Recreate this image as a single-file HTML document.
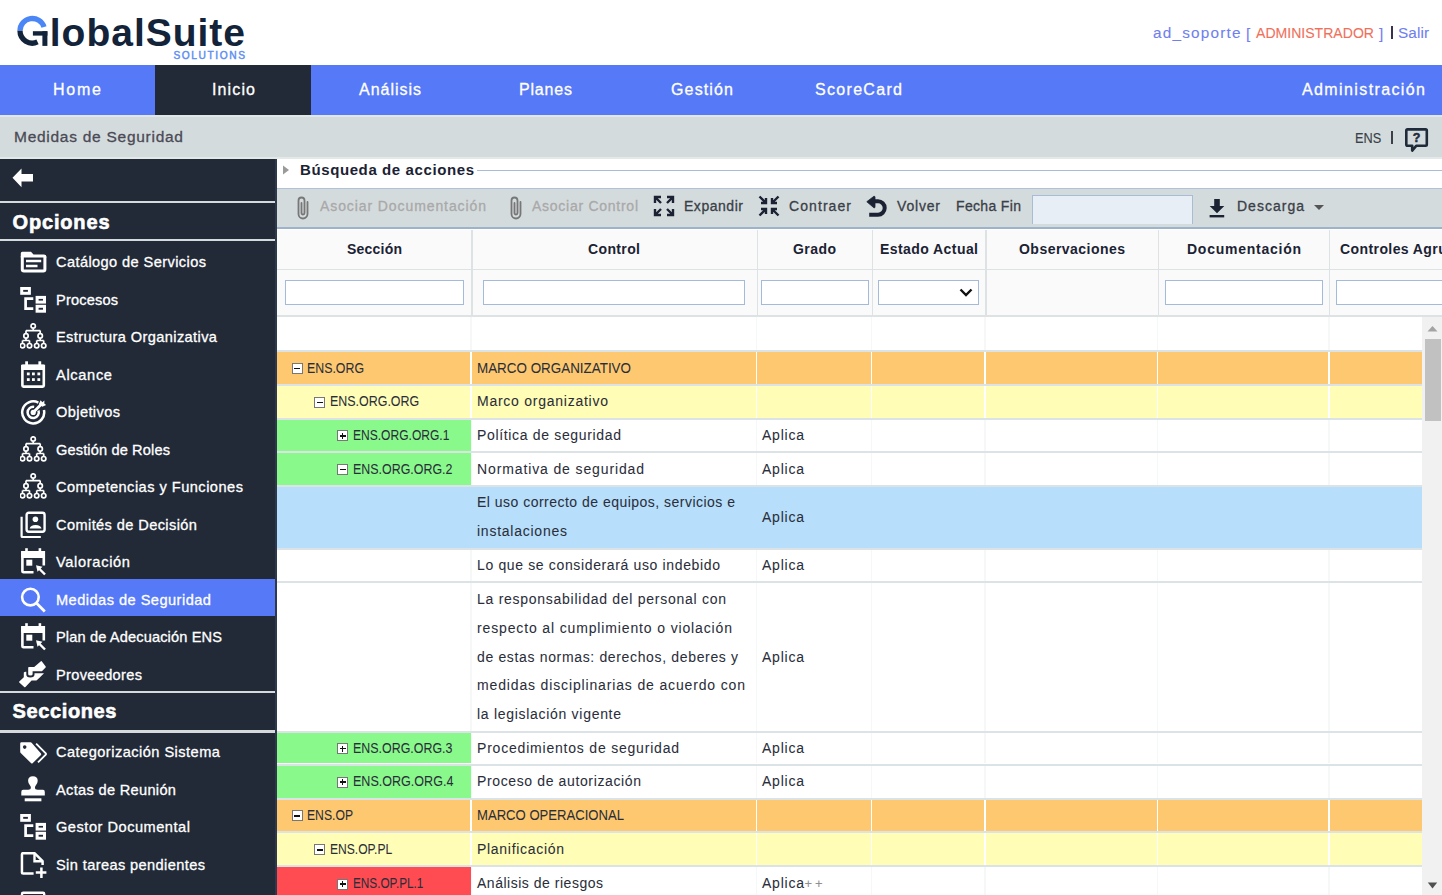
<!DOCTYPE html><html><head><meta charset="utf-8"><title>GlobalSuite</title><style>
*{margin:0;padding:0;box-sizing:border-box}
html,body{width:1442px;height:895px;overflow:hidden;background:#fff;font-family:"Liberation Sans",sans-serif}
.t{position:absolute;white-space:nowrap;line-height:1.117}
.a{position:absolute}
</style></head><body>
<svg class="a" style="left:15px;top:13px" width="36" height="36" viewBox="0 0 36 36">
<path d="M5 17.8 A12.3 12.3 0 0 1 29.0 14.04" fill="none" stroke="#4B86F7" stroke-width="5.3"/>
<path d="M5 17.8 A12.3 12.3 0 0 0 22.5 28.95" fill="none" stroke="#12233A" stroke-width="5.3"/>
<rect x="17.9" y="18.2" width="14.5" height="4.4" fill="#12233A"/><rect x="27.4" y="18.2" width="5" height="14.7" fill="#12233A"/>
</svg>
<div class="t" style="left:49.8px;top:10.7px;font-size:39px;letter-spacing:0.982px;color:#12233A;font-weight:bold;">lobalSuite</div>
<div class="t" style="left:173.5px;top:49.6px;font-size:10.2px;letter-spacing:1.569px;color:#5E8FF2;-webkit-text-stroke:0.45px #5E8FF2;">SOLUTIONS</div>
<div class="t" style="left:1153.0px;top:24.0px;font-size:15.3px;letter-spacing:1.215px;color:#6F7FF0;-webkit-text-stroke:0.10px #6F7FF0;">ad_soporte</div>
<div class="t" style="left:1246.0px;top:24.7px;font-size:15.3px;letter-spacing:0.000px;color:#6F7FF0;-webkit-text-stroke:0.10px #6F7FF0;">[</div>
<div class="t" style="left:1256.0px;top:24.0px;font-size:15.3px;letter-spacing:0.000px;color:#F0705A;-webkit-text-stroke:0.10px #F0705A;transform:scaleX(0.9193);transform-origin:0 0;">ADMINISTRADOR</div>
<div class="t" style="left:1379.0px;top:24.7px;font-size:15.3px;letter-spacing:0.000px;color:#6F7FF0;-webkit-text-stroke:0.10px #6F7FF0;">]</div>
<div class="a" style="left:1390.5px;top:26px;width:2px;height:13px;background:#3a3350"></div>
<div class="t" style="left:1398.0px;top:24.0px;font-size:15.3px;letter-spacing:0.098px;color:#6F7FF0;-webkit-text-stroke:0.10px #6F7FF0;">Salir</div>
<div class="a" style="left:0;top:65px;width:1442px;height:50px;background:#5679F7"></div>
<div class="a" style="left:155px;top:65px;width:156px;height:50px;background:#222A38"></div>
<div class="t" style="left:53.0px;top:80.5px;font-size:16px;letter-spacing:1.773px;color:#fff;-webkit-text-stroke:0.30px #fff;">Home</div>
<div class="t" style="left:212.0px;top:80.5px;font-size:16px;letter-spacing:1.130px;color:#fff;-webkit-text-stroke:0.30px #fff;">Inicio</div>
<div class="t" style="left:359.0px;top:80.5px;font-size:16px;letter-spacing:0.981px;color:#fff;-webkit-text-stroke:0.30px #fff;">Análisis</div>
<div class="t" style="left:519.0px;top:80.5px;font-size:16px;letter-spacing:0.816px;color:#fff;-webkit-text-stroke:0.30px #fff;">Planes</div>
<div class="t" style="left:671.0px;top:80.5px;font-size:16px;letter-spacing:1.143px;color:#fff;-webkit-text-stroke:0.30px #fff;">Gestión</div>
<div class="t" style="left:815.0px;top:80.5px;font-size:16px;letter-spacing:1.315px;color:#fff;-webkit-text-stroke:0.30px #fff;">ScoreCard</div>
<div class="t" style="left:1302.0px;top:80.5px;font-size:16px;letter-spacing:1.390px;color:#fff;-webkit-text-stroke:0.30px #fff;">Administración</div>
<div class="a" style="left:0;top:115px;width:1442px;height:44px;background:#D4DBDD"></div>
<div class="a" style="left:0;top:114.8px;width:1442px;height:2px;background:#E1E6E7"></div>
<div class="a" style="left:0;top:156.6px;width:1442px;height:2px;background:#E3E8E8"></div>
<div class="t" style="left:14.0px;top:128.3px;font-size:15.5px;letter-spacing:0.731px;color:#4a4a55;-webkit-text-stroke:0.30px #4a4a55;">Medidas de Seguridad</div>
<div class="t" style="left:1355.0px;top:129.5px;font-size:14.5px;letter-spacing:0.000px;color:#3a3f48;-webkit-text-stroke:0.15px #3a3f48;transform:scaleX(0.8787);transform-origin:0 0;">ENS</div>
<div class="a" style="left:1391px;top:131px;width:1.5px;height:13px;background:#3a3f48"></div>
<svg class="a" style="left:1403px;top:127px" width="26" height="26" viewBox="0 0 26 26">
<path d="M3.3 3.6 Q3.3 2.4 4.5 2.4 H22.6 Q23.8 2.4 23.8 3.6 V17.6 Q23.8 18.8 22.6 18.8 H13.2 L9.2 23.6 V18.8 H4.5 Q3.3 18.8 3.3 17.6 Z" fill="none" stroke="#1F2B3A" stroke-width="2.6" stroke-linejoin="round"/>
<text x="13.6" y="15.3" font-family="Liberation Sans" font-weight="bold" font-size="12.5" text-anchor="middle" fill="#1F2B3A" stroke="#1F2B3A" stroke-width="0.5">?</text>
</svg>
<div class="a" style="left:0;top:159px;width:276px;height:736px;background:#222A38"></div>
<svg class="a" style="left:12px;top:168px" width="22" height="20" viewBox="0 0 22 20"><path d="M0.5 9.7 L9.5 0.5 V6 H21 V13.5 H9.5 V19.3 Z" fill="#fff"/></svg>
<div class="a" style="left:0;top:200.5px;width:276px;height:2.6px;background:#D5DADD"></div>
<div class="t" style="left:12.5px;top:210.6px;font-size:20px;letter-spacing:0.838px;color:#fff;font-weight:bold;-webkit-text-stroke:0.60px #fff;">Opciones</div>
<div class="a" style="left:0;top:238.7px;width:276px;height:2.6px;background:#D5DADD"></div>
<div class="a" style="left:0;top:578.6px;width:275.2px;height:37.5px;background:#5679F7"></div>
<div class="a" style="left:0;top:690.7px;width:276px;height:2.6px;background:#D5DADD"></div>
<div class="t" style="left:12.5px;top:700.2px;font-size:20px;letter-spacing:0.631px;color:#fff;font-weight:bold;-webkit-text-stroke:0.60px #fff;">Secciones</div>
<div class="a" style="left:0;top:730px;width:276px;height:2.6px;background:#D5DADD"></div>
<div class="t" style="left:56.0px;top:254.0px;font-size:14.6px;letter-spacing:0.399px;color:#fff;-webkit-text-stroke:0.30px #fff;">Catálogo de Servicios</div>
<div class="t" style="left:56.0px;top:291.5px;font-size:14.6px;letter-spacing:0.163px;color:#fff;-webkit-text-stroke:0.30px #fff;">Procesos</div>
<div class="t" style="left:56.0px;top:329.0px;font-size:14.6px;letter-spacing:0.384px;color:#fff;-webkit-text-stroke:0.30px #fff;">Estructura Organizativa</div>
<div class="t" style="left:56.0px;top:366.5px;font-size:14.6px;letter-spacing:0.676px;color:#fff;-webkit-text-stroke:0.30px #fff;">Alcance</div>
<div class="t" style="left:56.0px;top:404.0px;font-size:14.6px;letter-spacing:0.392px;color:#fff;-webkit-text-stroke:0.30px #fff;">Objetivos</div>
<div class="t" style="left:56.0px;top:441.5px;font-size:14.6px;letter-spacing:0.133px;color:#fff;-webkit-text-stroke:0.30px #fff;">Gestión de Roles</div>
<div class="t" style="left:56.0px;top:479.0px;font-size:14.6px;letter-spacing:0.474px;color:#fff;-webkit-text-stroke:0.30px #fff;">Competencias y Funciones</div>
<div class="t" style="left:56.0px;top:516.5px;font-size:14.6px;letter-spacing:0.395px;color:#fff;-webkit-text-stroke:0.30px #fff;">Comités de Decisión</div>
<div class="t" style="left:56.0px;top:554.0px;font-size:14.6px;letter-spacing:0.677px;color:#fff;-webkit-text-stroke:0.30px #fff;">Valoración</div>
<div class="t" style="left:56.0px;top:591.5px;font-size:14.6px;letter-spacing:0.468px;color:#fff;-webkit-text-stroke:0.30px #fff;">Medidas de Seguridad</div>
<div class="t" style="left:56.0px;top:629.0px;font-size:14.6px;letter-spacing:0.136px;color:#fff;-webkit-text-stroke:0.30px #fff;">Plan de Adecuación ENS</div>
<div class="t" style="left:56.0px;top:666.5px;font-size:14.6px;letter-spacing:0.322px;color:#fff;-webkit-text-stroke:0.30px #fff;">Proveedores</div>
<div class="t" style="left:56.0px;top:744.0px;font-size:14.6px;letter-spacing:0.467px;color:#fff;-webkit-text-stroke:0.30px #fff;">Categorización Sistema</div>
<div class="t" style="left:56.0px;top:781.5px;font-size:14.6px;letter-spacing:0.316px;color:#fff;-webkit-text-stroke:0.30px #fff;">Actas de Reunión</div>
<div class="t" style="left:56.0px;top:819.0px;font-size:14.6px;letter-spacing:0.514px;color:#fff;-webkit-text-stroke:0.30px #fff;">Gestor Documental</div>
<div class="t" style="left:56.0px;top:856.5px;font-size:14.6px;letter-spacing:0.388px;color:#fff;-webkit-text-stroke:0.30px #fff;">Sin tareas pendientes</div>
<div class="a" style="left:275.2px;top:159px;width:1.8px;height:736px;background:#2E3A4C"></div>
<svg class="a" style="left:282px;top:165px" width="8" height="10" viewBox="0 0 8 10"><path d="M1 0.5 L7 5 L1 9.5 Z" fill="#9a9a9a"/></svg>
<div class="t" style="left:300.0px;top:162.0px;font-size:15px;letter-spacing:0.603px;color:#1B2233;font-weight:bold;">Búsqueda de acciones</div>
<div class="a" style="left:477px;top:169.6px;width:965px;height:1.2px;background:#A9BCD6"></div>
<div class="a" style="left:277px;top:187.5px;width:1165px;height:41.3px;background:#D4DBDD;border-top:1.6px solid #AFC2D8;border-bottom:2px solid #9DB2CB"></div>
<svg class="a" style="left:295px;top:195px" width="16" height="26" viewBox="0 0 16 26"><path d="M12.5 7 V19 A4.5 4.5 0 0 1 3.5 19 V5.5 A3 3 0 0 1 9.5 5.5 V18 A1.5 1.5 0 0 1 6.5 18 V8" fill="none" stroke="#777" stroke-width="1.8" stroke-linecap="round"/></svg>
<div class="t" style="left:320.0px;top:198.5px;font-size:14px;letter-spacing:0.908px;color:#A9A9A9;-webkit-text-stroke:0.30px #A9A9A9;">Asociar Documentación</div>
<svg class="a" style="left:508px;top:195px" width="16" height="26" viewBox="0 0 16 26"><path d="M12.5 7 V19 A4.5 4.5 0 0 1 3.5 19 V5.5 A3 3 0 0 1 9.5 5.5 V18 A1.5 1.5 0 0 1 6.5 18 V8" fill="none" stroke="#777" stroke-width="1.8" stroke-linecap="round"/></svg>
<div class="t" style="left:532.0px;top:198.5px;font-size:14px;letter-spacing:0.735px;color:#A9A9A9;-webkit-text-stroke:0.30px #A9A9A9;">Asociar Control</div>
<svg class="a" style="left:653px;top:195px" width="22" height="22" viewBox="0 0 22 22"><g fill="none" stroke="#1B2233" stroke-width="2.4"><path d="M2 8 V2 H8 M2 2 L8 8"/><path d="M14 2 H20 V8 M20 2 L14 8"/><path d="M2 14 V20 H8 M2 20 L8 14"/><path d="M20 14 V20 H14 M20 20 L14 14"/></g></svg>
<div class="t" style="left:684.0px;top:198.5px;font-size:14px;letter-spacing:0.535px;color:#3a3f48;-webkit-text-stroke:0.30px #3a3f48;">Expandir</div>
<svg class="a" style="left:758px;top:195px" width="22" height="22" viewBox="0 0 22 22"><g fill="none" stroke="#1B2233" stroke-width="2.4"><path d="M3 8 H8 V3 M1.5 1.5 L8 8"/><path d="M14 3 V8 H19 M20.5 1.5 L14 8"/><path d="M3 14 H8 V19 M1.5 20.5 L8 14"/><path d="M19 14 H14 V19 M20.5 20.5 L14 14"/></g></svg>
<div class="t" style="left:789.0px;top:198.5px;font-size:14px;letter-spacing:1.076px;color:#3a3f48;-webkit-text-stroke:0.30px #3a3f48;">Contraer</div>
<svg class="a" style="left:865px;top:195px" width="24" height="24" viewBox="0 0 24 24"><path d="M8 6.3 H13 A6.7 6.7 0 0 1 13 19.7 H4.2" fill="none" stroke="#1B2233" stroke-width="4"/><path d="M1.8 6.7 L8.9 1.3 Q10 1 10 2.2 V11.8 Q10 13.2 8.9 12.8 Z" fill="#1B2233" stroke="#1B2233" stroke-width="0.8" stroke-linejoin="round"/></svg>
<div class="t" style="left:897.0px;top:198.5px;font-size:14px;letter-spacing:0.818px;color:#3a3f48;-webkit-text-stroke:0.30px #3a3f48;">Volver</div>
<div class="t" style="left:956.0px;top:198.5px;font-size:14px;letter-spacing:0.344px;color:#3a3f48;-webkit-text-stroke:0.30px #3a3f48;">Fecha Fin</div>
<div class="a" style="left:1032px;top:194.5px;width:161px;height:29px;background:#E8EEF5;border:1px solid #A9BCD6;border-bottom:none"></div>
<svg class="a" style="left:1206px;top:196px" width="22" height="22" viewBox="0 0 22 22"><path d="M8.2 3 H13.8 V10 H18.3 L11 17.3 L3.7 10 H8.2 Z" fill="#1B2233"/><rect x="3.6" y="19" width="14.6" height="2.4" fill="#1B2233"/></svg>
<div class="t" style="left:1237.0px;top:198.5px;font-size:14px;letter-spacing:1.012px;color:#3a3f48;-webkit-text-stroke:0.30px #3a3f48;">Descarga</div>
<svg class="a" style="left:1313px;top:204px" width="12" height="7" viewBox="0 0 12 7"><path d="M1 1 H11 L6 6 Z" fill="#555"/></svg>
<div class="a" style="left:277px;top:229.5px;width:1165px;height:87px;background:#FAFAFA"></div>
<div class="a" style="left:471.2px;top:229.5px;width:1.6px;height:86px;background:#DDE3E4"></div>
<div class="a" style="left:756.7px;top:229.5px;width:1.6px;height:86px;background:#DDE3E4"></div>
<div class="a" style="left:871.7px;top:229.5px;width:1.6px;height:86px;background:#DDE3E4"></div>
<div class="a" style="left:985.2px;top:229.5px;width:1.6px;height:86px;background:#DDE3E4"></div>
<div class="a" style="left:1157.6px;top:229.5px;width:1.6px;height:86px;background:#DDE3E4"></div>
<div class="a" style="left:1328.9px;top:229.5px;width:1.6px;height:86px;background:#DDE3E4"></div>
<div class="a" style="left:277px;top:268.5px;width:1165px;height:1.8px;background:#DDE3E4"></div>
<div class="a" style="left:277px;top:314.5px;width:1165px;height:2px;background:#DDE3E4"></div>
<div class="t" style="left:347.0px;top:241.5px;font-size:14px;letter-spacing:0.219px;color:#1B2233;font-weight:bold;">Sección</div>
<div class="t" style="left:588.0px;top:241.5px;font-size:14px;letter-spacing:0.372px;color:#1B2233;font-weight:bold;">Control</div>
<div class="t" style="left:793.0px;top:241.5px;font-size:14px;letter-spacing:0.443px;color:#1B2233;font-weight:bold;">Grado</div>
<div class="t" style="left:880.0px;top:241.5px;font-size:14px;letter-spacing:0.431px;color:#1B2233;font-weight:bold;">Estado Actual</div>
<div class="t" style="left:1019.0px;top:241.5px;font-size:14px;letter-spacing:0.468px;color:#1B2233;font-weight:bold;">Observaciones</div>
<div class="t" style="left:1187.0px;top:241.5px;font-size:14px;letter-spacing:0.749px;color:#1B2233;font-weight:bold;">Documentación</div>
<div class="t" style="left:1340.0px;top:241.5px;font-size:14px;letter-spacing:0.411px;color:#1B2233;font-weight:bold;">Controles Agrupados</div>
<div class="a" style="left:285px;top:279.8px;width:179px;height:25.5px;background:#fff;border:1.5px solid #A3BADA"></div>
<div class="a" style="left:483px;top:279.8px;width:262px;height:25.5px;background:#fff;border:1.5px solid #A3BADA"></div>
<div class="a" style="left:760.5px;top:279.8px;width:108.5px;height:25.5px;background:#fff;border:1.5px solid #A3BADA"></div>
<div class="a" style="left:1164.5px;top:279.8px;width:158.5px;height:25.5px;background:#fff;border:1.5px solid #A3BADA"></div>
<div class="a" style="left:1336px;top:279.8px;width:124px;height:25.5px;background:#fff;border:1.5px solid #A3BADA"></div>
<div class="a" style="left:878px;top:279.8px;width:101px;height:24.8px;background:#fff;border:1.5px solid #A3BADA"></div>
<svg class="a" style="left:959px;top:288px" width="14" height="9" viewBox="0 0 14 9"><path d="M1.5 1.5 L7 7 L12.5 1.5" fill="none" stroke="#111" stroke-width="2.4"/></svg>
<div class="a" style="left:277px;top:316.5px;width:1145px;height:579px;background:#fff"></div>
<div class="a" style="left:277px;top:350.0px;width:1145px;height:2px;background:#DCE3E6"></div>
<div class="a" style="left:470.35px;top:316.5px;width:1.5px;height:33.5px;background:#F6F7F7"></div>
<div class="a" style="left:755.85px;top:316.5px;width:1.5px;height:33.5px;background:#F6F7F7"></div>
<div class="a" style="left:870.85px;top:316.5px;width:1.5px;height:33.5px;background:#F6F7F7"></div>
<div class="a" style="left:984.35px;top:316.5px;width:1.5px;height:33.5px;background:#F6F7F7"></div>
<div class="a" style="left:1156.75px;top:316.5px;width:1.5px;height:33.5px;background:#F6F7F7"></div>
<div class="a" style="left:1328.05px;top:316.5px;width:1.5px;height:33.5px;background:#F6F7F7"></div>
<div class="a" style="left:277px;top:384.0px;width:1145px;height:2px;background:#DCE3E6"></div>
<div class="a" style="left:277px;top:352.0px;width:1145px;height:32.0px;background:#FDC86F"></div>
<div class="a" style="left:470.35px;top:352.0px;width:1.5px;height:32.0px;background:#fff"></div>
<div class="a" style="left:755.85px;top:352.0px;width:1.5px;height:32.0px;background:#fff"></div>
<div class="a" style="left:870.85px;top:352.0px;width:1.5px;height:32.0px;background:#fff"></div>
<div class="a" style="left:984.35px;top:352.0px;width:1.5px;height:32.0px;background:#fff"></div>
<div class="a" style="left:1156.75px;top:352.0px;width:1.5px;height:32.0px;background:#fff"></div>
<div class="a" style="left:1328.05px;top:352.0px;width:1.5px;height:32.0px;background:#fff"></div>
<div class="a" style="left:291.5px;top:363.0px;width:11px;height:11px;background:#fff;border:1.3px solid #777"></div>
<div class="a" style="left:294.0px;top:367.8px;width:6px;height:1.6px;background:#111"></div>
<div class="t" style="left:307.0px;top:360.5px;font-size:14px;letter-spacing:0.000px;color:#2A2E3A;-webkit-text-stroke:0.05px #2A2E3A;transform:scaleX(0.8828);transform-origin:0 0;">ENS.ORG</div>
<div class="t" style="left:477.0px;top:360.5px;font-size:14px;letter-spacing:0.000px;color:#2A2E3A;-webkit-text-stroke:0.05px #2A2E3A;transform:scaleX(0.9580);transform-origin:0 0;">MARCO ORGANIZATIVO</div>
<div class="a" style="left:277px;top:417.5px;width:1145px;height:2px;background:#DCE3E6"></div>
<div class="a" style="left:277px;top:386.0px;width:1145px;height:31.5px;background:#FFFDB6"></div>
<div class="a" style="left:470.35px;top:386.0px;width:1.5px;height:31.5px;background:#fff"></div>
<div class="a" style="left:755.85px;top:386.0px;width:1.5px;height:31.5px;background:#fff"></div>
<div class="a" style="left:870.85px;top:386.0px;width:1.5px;height:31.5px;background:#fff"></div>
<div class="a" style="left:984.35px;top:386.0px;width:1.5px;height:31.5px;background:#fff"></div>
<div class="a" style="left:1156.75px;top:386.0px;width:1.5px;height:31.5px;background:#fff"></div>
<div class="a" style="left:1328.05px;top:386.0px;width:1.5px;height:31.5px;background:#fff"></div>
<div class="a" style="left:314.3px;top:396.8px;width:11px;height:11px;background:#fff;border:1.3px solid #777"></div>
<div class="a" style="left:316.8px;top:401.6px;width:6px;height:1.6px;background:#111"></div>
<div class="t" style="left:329.8px;top:394.3px;font-size:14px;letter-spacing:0.000px;color:#2A2E3A;-webkit-text-stroke:0.05px #2A2E3A;transform:scaleX(0.8890);transform-origin:0 0;">ENS.ORG.ORG</div>
<div class="t" style="left:477.0px;top:394.3px;font-size:14px;letter-spacing:0.749px;color:#2A2E3A;-webkit-text-stroke:0.05px #2A2E3A;">Marco organizativo</div>
<div class="a" style="left:277px;top:451.3px;width:1145px;height:2px;background:#DCE3E6"></div>
<div class="a" style="left:470.35px;top:419.5px;width:1.5px;height:31.8px;background:#F6F7F7"></div>
<div class="a" style="left:755.85px;top:419.5px;width:1.5px;height:31.8px;background:#F6F7F7"></div>
<div class="a" style="left:870.85px;top:419.5px;width:1.5px;height:31.8px;background:#F6F7F7"></div>
<div class="a" style="left:984.35px;top:419.5px;width:1.5px;height:31.8px;background:#F6F7F7"></div>
<div class="a" style="left:1156.75px;top:419.5px;width:1.5px;height:31.8px;background:#F6F7F7"></div>
<div class="a" style="left:1328.05px;top:419.5px;width:1.5px;height:31.8px;background:#F6F7F7"></div>
<div class="a" style="left:277px;top:419.5px;width:194.0px;height:31.8px;background:#8AF98C"></div>
<div class="a" style="left:337.1px;top:430.4px;width:11px;height:11px;background:#fff;border:1.3px solid #777"></div>
<div class="a" style="left:339.6px;top:435.2px;width:6px;height:1.6px;background:#111"></div>
<div class="a" style="left:341.8px;top:433.0px;width:1.6px;height:6px;background:#111"></div>
<div class="t" style="left:352.6px;top:427.9px;font-size:14px;letter-spacing:0.000px;color:#2A2E3A;-webkit-text-stroke:0.05px #2A2E3A;transform:scaleX(0.8606);transform-origin:0 0;">ENS.ORG.ORG.1</div>
<div class="t" style="left:477.0px;top:427.9px;font-size:14px;letter-spacing:0.663px;color:#2A2E3A;-webkit-text-stroke:0.05px #2A2E3A;">Política de seguridad</div>
<div class="t" style="left:762.0px;top:427.9px;font-size:14px;letter-spacing:0.774px;color:#2A2E3A;-webkit-text-stroke:0.05px #2A2E3A;">Aplica</div>
<div class="a" style="left:277px;top:485.0px;width:1145px;height:2px;background:#DCE3E6"></div>
<div class="a" style="left:470.35px;top:453.3px;width:1.5px;height:31.7px;background:#F6F7F7"></div>
<div class="a" style="left:755.85px;top:453.3px;width:1.5px;height:31.7px;background:#F6F7F7"></div>
<div class="a" style="left:870.85px;top:453.3px;width:1.5px;height:31.7px;background:#F6F7F7"></div>
<div class="a" style="left:984.35px;top:453.3px;width:1.5px;height:31.7px;background:#F6F7F7"></div>
<div class="a" style="left:1156.75px;top:453.3px;width:1.5px;height:31.7px;background:#F6F7F7"></div>
<div class="a" style="left:1328.05px;top:453.3px;width:1.5px;height:31.7px;background:#F6F7F7"></div>
<div class="a" style="left:277px;top:453.3px;width:194.0px;height:31.7px;background:#8AF98C"></div>
<div class="a" style="left:337.1px;top:464.1px;width:11px;height:11px;background:#fff;border:1.3px solid #777"></div>
<div class="a" style="left:339.6px;top:468.9px;width:6px;height:1.6px;background:#111"></div>
<div class="t" style="left:352.6px;top:461.7px;font-size:14px;letter-spacing:0.000px;color:#2A2E3A;-webkit-text-stroke:0.05px #2A2E3A;transform:scaleX(0.8874);transform-origin:0 0;">ENS.ORG.ORG.2</div>
<div class="t" style="left:477.0px;top:461.7px;font-size:14px;letter-spacing:0.875px;color:#2A2E3A;-webkit-text-stroke:0.05px #2A2E3A;">Normativa de seguridad</div>
<div class="t" style="left:762.0px;top:461.7px;font-size:14px;letter-spacing:0.774px;color:#2A2E3A;-webkit-text-stroke:0.05px #2A2E3A;">Aplica</div>
<div class="a" style="left:277px;top:547.5px;width:1145px;height:2px;background:#DCE3E6"></div>
<div class="a" style="left:277px;top:487.0px;width:1145px;height:60.5px;background:#B7DEFB"></div>
<div class="t" style="left:477.0px;top:495.4px;font-size:14px;letter-spacing:0.482px;color:#2A2E3A;-webkit-text-stroke:0.05px #2A2E3A;">El uso correcto de equipos, servicios e</div>
<div class="t" style="left:477.0px;top:524.2px;font-size:14px;letter-spacing:0.755px;color:#2A2E3A;-webkit-text-stroke:0.05px #2A2E3A;">instalaciones</div>
<div class="t" style="left:762.0px;top:509.8px;font-size:14px;letter-spacing:0.774px;color:#2A2E3A;-webkit-text-stroke:0.05px #2A2E3A;">Aplica</div>
<div class="a" style="left:277px;top:581.2px;width:1145px;height:2px;background:#DCE3E6"></div>
<div class="a" style="left:470.35px;top:549.5px;width:1.5px;height:31.7px;background:#F6F7F7"></div>
<div class="a" style="left:755.85px;top:549.5px;width:1.5px;height:31.7px;background:#F6F7F7"></div>
<div class="a" style="left:870.85px;top:549.5px;width:1.5px;height:31.7px;background:#F6F7F7"></div>
<div class="a" style="left:984.35px;top:549.5px;width:1.5px;height:31.7px;background:#F6F7F7"></div>
<div class="a" style="left:1156.75px;top:549.5px;width:1.5px;height:31.7px;background:#F6F7F7"></div>
<div class="a" style="left:1328.05px;top:549.5px;width:1.5px;height:31.7px;background:#F6F7F7"></div>
<div class="t" style="left:477.0px;top:557.9px;font-size:14px;letter-spacing:0.642px;color:#2A2E3A;-webkit-text-stroke:0.05px #2A2E3A;">Lo que se considerará uso indebido</div>
<div class="t" style="left:762.0px;top:557.9px;font-size:14px;letter-spacing:0.774px;color:#2A2E3A;-webkit-text-stroke:0.05px #2A2E3A;">Aplica</div>
<div class="a" style="left:277px;top:730.8px;width:1145px;height:2px;background:#DCE3E6"></div>
<div class="a" style="left:470.35px;top:583.2px;width:1.5px;height:147.6px;background:#F6F7F7"></div>
<div class="a" style="left:755.85px;top:583.2px;width:1.5px;height:147.6px;background:#F6F7F7"></div>
<div class="a" style="left:870.85px;top:583.2px;width:1.5px;height:147.6px;background:#F6F7F7"></div>
<div class="a" style="left:984.35px;top:583.2px;width:1.5px;height:147.6px;background:#F6F7F7"></div>
<div class="a" style="left:1156.75px;top:583.2px;width:1.5px;height:147.6px;background:#F6F7F7"></div>
<div class="a" style="left:1328.05px;top:583.2px;width:1.5px;height:147.6px;background:#F6F7F7"></div>
<div class="t" style="left:477.0px;top:591.9px;font-size:14px;letter-spacing:0.731px;color:#2A2E3A;-webkit-text-stroke:0.05px #2A2E3A;">La responsabilidad del personal con</div>
<div class="t" style="left:477.0px;top:620.7px;font-size:14px;letter-spacing:0.860px;color:#2A2E3A;-webkit-text-stroke:0.05px #2A2E3A;">respecto al cumplimiento o violación</div>
<div class="t" style="left:477.0px;top:649.5px;font-size:14px;letter-spacing:0.654px;color:#2A2E3A;-webkit-text-stroke:0.05px #2A2E3A;">de estas normas: derechos, deberes y</div>
<div class="t" style="left:477.0px;top:678.3px;font-size:14px;letter-spacing:0.851px;color:#2A2E3A;-webkit-text-stroke:0.05px #2A2E3A;">medidas disciplinarias de acuerdo con</div>
<div class="t" style="left:477.0px;top:707.1px;font-size:14px;letter-spacing:0.705px;color:#2A2E3A;-webkit-text-stroke:0.05px #2A2E3A;">la legislación vigente</div>
<div class="t" style="left:762.0px;top:649.5px;font-size:14px;letter-spacing:0.774px;color:#2A2E3A;-webkit-text-stroke:0.05px #2A2E3A;">Aplica</div>
<div class="a" style="left:277px;top:763.5px;width:1145px;height:2px;background:#DCE3E6"></div>
<div class="a" style="left:470.35px;top:732.8px;width:1.5px;height:30.7px;background:#F6F7F7"></div>
<div class="a" style="left:755.85px;top:732.8px;width:1.5px;height:30.7px;background:#F6F7F7"></div>
<div class="a" style="left:870.85px;top:732.8px;width:1.5px;height:30.7px;background:#F6F7F7"></div>
<div class="a" style="left:984.35px;top:732.8px;width:1.5px;height:30.7px;background:#F6F7F7"></div>
<div class="a" style="left:1156.75px;top:732.8px;width:1.5px;height:30.7px;background:#F6F7F7"></div>
<div class="a" style="left:1328.05px;top:732.8px;width:1.5px;height:30.7px;background:#F6F7F7"></div>
<div class="a" style="left:277px;top:732.8px;width:194.0px;height:30.7px;background:#8AF98C"></div>
<div class="a" style="left:337.1px;top:743.1px;width:11px;height:11px;background:#fff;border:1.3px solid #777"></div>
<div class="a" style="left:339.6px;top:747.9px;width:6px;height:1.6px;background:#111"></div>
<div class="a" style="left:341.8px;top:745.8px;width:1.6px;height:6px;background:#111"></div>
<div class="t" style="left:352.6px;top:740.7px;font-size:14px;letter-spacing:0.000px;color:#2A2E3A;-webkit-text-stroke:0.05px #2A2E3A;transform:scaleX(0.8874);transform-origin:0 0;">ENS.ORG.ORG.3</div>
<div class="t" style="left:477.0px;top:740.7px;font-size:14px;letter-spacing:0.795px;color:#2A2E3A;-webkit-text-stroke:0.05px #2A2E3A;">Procedimientos de seguridad</div>
<div class="t" style="left:762.0px;top:740.7px;font-size:14px;letter-spacing:0.774px;color:#2A2E3A;-webkit-text-stroke:0.05px #2A2E3A;">Aplica</div>
<div class="a" style="left:277px;top:797.5px;width:1145px;height:2px;background:#DCE3E6"></div>
<div class="a" style="left:470.35px;top:765.5px;width:1.5px;height:32.0px;background:#F6F7F7"></div>
<div class="a" style="left:755.85px;top:765.5px;width:1.5px;height:32.0px;background:#F6F7F7"></div>
<div class="a" style="left:870.85px;top:765.5px;width:1.5px;height:32.0px;background:#F6F7F7"></div>
<div class="a" style="left:984.35px;top:765.5px;width:1.5px;height:32.0px;background:#F6F7F7"></div>
<div class="a" style="left:1156.75px;top:765.5px;width:1.5px;height:32.0px;background:#F6F7F7"></div>
<div class="a" style="left:1328.05px;top:765.5px;width:1.5px;height:32.0px;background:#F6F7F7"></div>
<div class="a" style="left:277px;top:765.5px;width:194.0px;height:32.0px;background:#8AF98C"></div>
<div class="a" style="left:337.1px;top:776.5px;width:11px;height:11px;background:#fff;border:1.3px solid #777"></div>
<div class="a" style="left:339.6px;top:781.3px;width:6px;height:1.6px;background:#111"></div>
<div class="a" style="left:341.8px;top:779.1px;width:1.6px;height:6px;background:#111"></div>
<div class="t" style="left:352.6px;top:774.0px;font-size:14px;letter-spacing:0.000px;color:#2A2E3A;-webkit-text-stroke:0.05px #2A2E3A;transform:scaleX(0.8963);transform-origin:0 0;">ENS.ORG.ORG.4</div>
<div class="t" style="left:477.0px;top:774.0px;font-size:14px;letter-spacing:0.627px;color:#2A2E3A;-webkit-text-stroke:0.05px #2A2E3A;">Proceso de autorización</div>
<div class="t" style="left:762.0px;top:774.0px;font-size:14px;letter-spacing:0.774px;color:#2A2E3A;-webkit-text-stroke:0.05px #2A2E3A;">Aplica</div>
<div class="a" style="left:277px;top:831.3px;width:1145px;height:2px;background:#DCE3E6"></div>
<div class="a" style="left:277px;top:799.5px;width:1145px;height:31.8px;background:#FDC86F"></div>
<div class="a" style="left:470.35px;top:799.5px;width:1.5px;height:31.8px;background:#fff"></div>
<div class="a" style="left:755.85px;top:799.5px;width:1.5px;height:31.8px;background:#fff"></div>
<div class="a" style="left:870.85px;top:799.5px;width:1.5px;height:31.8px;background:#fff"></div>
<div class="a" style="left:984.35px;top:799.5px;width:1.5px;height:31.8px;background:#fff"></div>
<div class="a" style="left:1156.75px;top:799.5px;width:1.5px;height:31.8px;background:#fff"></div>
<div class="a" style="left:1328.05px;top:799.5px;width:1.5px;height:31.8px;background:#fff"></div>
<div class="a" style="left:291.5px;top:810.4px;width:11px;height:11px;background:#fff;border:1.3px solid #777"></div>
<div class="a" style="left:294.0px;top:815.2px;width:6px;height:1.6px;background:#111"></div>
<div class="t" style="left:307.0px;top:807.9px;font-size:14px;letter-spacing:0.000px;color:#2A2E3A;-webkit-text-stroke:0.05px #2A2E3A;transform:scaleX(0.8695);transform-origin:0 0;">ENS.OP</div>
<div class="t" style="left:477.0px;top:807.9px;font-size:14px;letter-spacing:0.000px;color:#2A2E3A;-webkit-text-stroke:0.05px #2A2E3A;transform:scaleX(0.9355);transform-origin:0 0;">MARCO OPERACIONAL</div>
<div class="a" style="left:277px;top:865.3px;width:1145px;height:2px;background:#DCE3E6"></div>
<div class="a" style="left:277px;top:833.3px;width:1145px;height:32.0px;background:#FFFDB6"></div>
<div class="a" style="left:470.35px;top:833.3px;width:1.5px;height:32.0px;background:#fff"></div>
<div class="a" style="left:755.85px;top:833.3px;width:1.5px;height:32.0px;background:#fff"></div>
<div class="a" style="left:870.85px;top:833.3px;width:1.5px;height:32.0px;background:#fff"></div>
<div class="a" style="left:984.35px;top:833.3px;width:1.5px;height:32.0px;background:#fff"></div>
<div class="a" style="left:1156.75px;top:833.3px;width:1.5px;height:32.0px;background:#fff"></div>
<div class="a" style="left:1328.05px;top:833.3px;width:1.5px;height:32.0px;background:#fff"></div>
<div class="a" style="left:314.3px;top:844.3px;width:11px;height:11px;background:#fff;border:1.3px solid #777"></div>
<div class="a" style="left:316.8px;top:849.1px;width:6px;height:1.6px;background:#111"></div>
<div class="t" style="left:329.8px;top:841.8px;font-size:14px;letter-spacing:0.000px;color:#2A2E3A;-webkit-text-stroke:0.05px #2A2E3A;transform:scaleX(0.8626);transform-origin:0 0;">ENS.OP.PL</div>
<div class="t" style="left:477.0px;top:841.8px;font-size:14px;letter-spacing:0.700px;color:#2A2E3A;-webkit-text-stroke:0.05px #2A2E3A;">Planificación</div>
<div class="a" style="left:277px;top:900.0px;width:1145px;height:2px;background:#DCE3E6"></div>
<div class="a" style="left:470.35px;top:867.3px;width:1.5px;height:32.7px;background:#F6F7F7"></div>
<div class="a" style="left:755.85px;top:867.3px;width:1.5px;height:32.7px;background:#F6F7F7"></div>
<div class="a" style="left:870.85px;top:867.3px;width:1.5px;height:32.7px;background:#F6F7F7"></div>
<div class="a" style="left:984.35px;top:867.3px;width:1.5px;height:32.7px;background:#F6F7F7"></div>
<div class="a" style="left:1156.75px;top:867.3px;width:1.5px;height:32.7px;background:#F6F7F7"></div>
<div class="a" style="left:1328.05px;top:867.3px;width:1.5px;height:32.7px;background:#F6F7F7"></div>
<div class="a" style="left:277px;top:867.3px;width:194.0px;height:32.7px;background:#FE4C52"></div>
<div class="a" style="left:337.1px;top:878.6px;width:11px;height:11px;background:#fff;border:1.3px solid #777"></div>
<div class="a" style="left:339.6px;top:883.4px;width:6px;height:1.6px;background:#111"></div>
<div class="a" style="left:341.8px;top:881.2px;width:1.6px;height:6px;background:#111"></div>
<div class="t" style="left:352.6px;top:876.2px;font-size:14px;letter-spacing:0.000px;color:#2A2E3A;-webkit-text-stroke:0.05px #2A2E3A;transform:scaleX(0.8403);transform-origin:0 0;">ENS.OP.PL.1</div>
<div class="t" style="left:477.0px;top:876.2px;font-size:14px;letter-spacing:0.515px;color:#2A2E3A;-webkit-text-stroke:0.05px #2A2E3A;">Análisis de riesgos</div>
<div class="t" style="left:762.0px;top:876.2px;font-size:14px;letter-spacing:0.774px;color:#2A2E3A;-webkit-text-stroke:0.05px #2A2E3A;">Aplica</div>
<div class="t" style="left:804.5px;top:876.5px;font-size:13px;letter-spacing:2.816px;color:#8f8f8f;-webkit-text-stroke:0.10px #8f8f8f;">++</div>
<div class="a" style="left:1422px;top:316.5px;width:20px;height:579px;background:#F1F1F1"></div>
<svg class="a" style="left:1427px;top:325px" width="11" height="7" viewBox="0 0 11 7"><path d="M0.5 6.5 L5.5 1 L10.5 6.5 Z" fill="#A3A3A3"/></svg>
<div class="a" style="left:1424.5px;top:339px;width:16px;height:82px;background:#C1C1C1"></div>
<svg class="a" style="left:1427px;top:881.5px" width="11" height="7" viewBox="0 0 11 7"><path d="M0.8 0.6 H10.2 L5.5 6.4 Z" fill="#505050"/></svg>
<svg class="a" style="left:20px;top:248.5px" width="28" height="28" viewBox="0 0 28 28"><path d="M0.8 8.6 V4.3 Q0.8 2.8 2.3 2.8 H11 L13.5 5.5 H24 Q26.4 5.5 26.4 7.9 V8.6 Z" fill="#fff"/><path d="M2.3 7 V20.3 Q2.3 22 4 22 H23.2 Q24.9 22 24.9 20.3 V7.5" fill="none" stroke="#fff" stroke-width="3" stroke-linejoin="round"/><path d="M6 12.05 H21.2 M6 17.1 H17.5" stroke="#fff" stroke-width="2.5"/></svg>
<svg class="a" style="left:20px;top:287.0px" width="28" height="28" viewBox="0 0 28 28"><g fill="none" stroke="#fff"><rect x="1.7" y="1.4" width="7.7" height="4.9" stroke-width="3"/><path d="M13.3 11.65 H5.6 V21.55 H13.3" stroke-width="2.7"/><rect x="17.1" y="10.4" width="7.4" height="4.7" stroke-width="3"/><rect x="17.1" y="19.3" width="7.4" height="4.9" stroke-width="3"/></g></svg>
<svg class="a" style="left:20px;top:323.0px" width="28" height="28" viewBox="0 0 28 28"><g fill="none" stroke="#fff" stroke-width="1.7"><circle cx="13.2" cy="3" r="2.2"/><path d="M13.2 5.2 V7.6 M6 7.6 H20.2 M6 7.6 V10.7 M20.2 7.6 V10.7"/><circle cx="6" cy="12.9" r="2.2"/><circle cx="20.2" cy="12.9" r="2.2"/><path d="M6 15.1 V17.5 M2.5 17.5 H9.5 M2.5 17.5 V20.5 M9.5 17.5 V20.5 M20.2 15.1 V17.5 M16.7 17.5 H23.7 M16.7 17.5 V20.5 M23.7 17.5 V20.5"/><circle cx="2.5" cy="22.7" r="2.2"/><circle cx="9.5" cy="22.7" r="2.2"/><circle cx="16.7" cy="22.7" r="2.2"/><circle cx="23.7" cy="22.7" r="2.2"/></g></svg>
<svg class="a" style="left:20px;top:361.3px" width="28" height="28" viewBox="0 0 28 28"><path d="M2.4 5 H23.8 V24.5 Q23.8 25.6 22.7 25.6 H3.5 Q2.4 25.6 2.4 24.5 Z" fill="none" stroke="#fff" stroke-width="2.6"/><rect x="1.2" y="3.5" width="23.8" height="5.6" rx="1.5" fill="#fff"/><rect x="5.2" y="0.3" width="2.8" height="4" fill="#fff"/><rect x="18.4" y="0.3" width="2.8" height="4" fill="#fff"/><rect x="6.9" y="11.5" width="2.8" height="2.8" fill="#fff"/><rect x="6.9" y="17.200000000000003" width="2.8" height="2.8" fill="#fff"/><rect x="12.0" y="11.5" width="2.8" height="2.8" fill="#fff"/><rect x="12.0" y="17.200000000000003" width="2.8" height="2.8" fill="#fff"/><rect x="17.400000000000002" y="11.5" width="2.8" height="2.8" fill="#fff"/><rect x="17.400000000000002" y="17.200000000000003" width="2.8" height="2.8" fill="#fff"/></svg>
<svg class="a" style="left:20px;top:398.5px" width="28" height="28" viewBox="0 0 28 28"><g fill="none" stroke="#fff" stroke-width="2.5"><path d="M23.96 11.11 A11 11 0 1 1 18.36 3.69"/><path d="M18.46 11.48 A5.6 5.6 0 1 1 14.17 7.89"/></g><circle cx="13.2" cy="13.4" r="2.6" fill="#fff"/><path d="M13.2 13.4 L21.5 5.1" stroke="#fff" stroke-width="2.8"/><path d="M18.8 5.2 L20.6 1.3 L22.3 3.3 L24.4 1.6 L24.3 4.4 L26.1 6 L22.4 7.8 Z" fill="#fff"/></svg>
<svg class="a" style="left:20px;top:435.7px" width="28" height="28" viewBox="0 0 28 28"><g fill="none" stroke="#fff" stroke-width="1.7"><circle cx="13.2" cy="3" r="2.2"/><path d="M13.2 5.2 V7.6 M6 7.6 H20.2 M6 7.6 V10.7 M20.2 7.6 V10.7"/><circle cx="6" cy="12.9" r="2.2"/><circle cx="20.2" cy="12.9" r="2.2"/><path d="M6 15.1 V17.5 M2.5 17.5 H9.5 M2.5 17.5 V20.5 M9.5 17.5 V20.5 M20.2 15.1 V17.5 M16.7 17.5 H23.7 M16.7 17.5 V20.5 M23.7 17.5 V20.5"/><circle cx="2.5" cy="22.7" r="2.2"/><circle cx="9.5" cy="22.7" r="2.2"/><circle cx="16.7" cy="22.7" r="2.2"/><circle cx="23.7" cy="22.7" r="2.2"/></g></svg>
<svg class="a" style="left:20px;top:473.0px" width="28" height="28" viewBox="0 0 28 28"><g fill="none" stroke="#fff" stroke-width="1.7"><circle cx="13.2" cy="3" r="2.2"/><path d="M13.2 5.2 V7.6 M6 7.6 H20.2 M6 7.6 V10.7 M20.2 7.6 V10.7"/><circle cx="6" cy="12.9" r="2.2"/><circle cx="20.2" cy="12.9" r="2.2"/><path d="M6 15.1 V17.5 M2.5 17.5 H9.5 M2.5 17.5 V20.5 M9.5 17.5 V20.5 M20.2 15.1 V17.5 M16.7 17.5 H23.7 M16.7 17.5 V20.5 M23.7 17.5 V20.5"/><circle cx="2.5" cy="22.7" r="2.2"/><circle cx="9.5" cy="22.7" r="2.2"/><circle cx="16.7" cy="22.7" r="2.2"/><circle cx="23.7" cy="22.7" r="2.2"/></g></svg>
<svg class="a" style="left:20px;top:511.0px" width="28" height="28" viewBox="0 0 28 28"><rect x="6.6" y="1.7" width="18" height="19" rx="2.2" fill="none" stroke="#fff" stroke-width="2.4"/><path d="M1.6 5.7 V25.2 Q1.6 26 2.4 26 H20.8" fill="none" stroke="#fff" stroke-width="2.2"/><circle cx="15.4" cy="8.3" r="2.8" fill="#fff"/><path d="M9.7 17.5 Q10.4 13.9 15.6 13.9 Q20.8 13.9 21.5 17.5 Z" fill="#fff"/></svg>
<svg class="a" style="left:20px;top:548.0px" width="28" height="28" viewBox="0 0 28 28"><path d="M2.4 18 V4.2 H23.8 V17.5 M2.4 18 V23.2 Q2.4 24.3 3.5 24.3 H13.5" fill="none" stroke="#fff" stroke-width="2.6"/><rect x="1.2" y="3" width="23.8" height="7" rx="1.5" fill="#fff"/><rect x="5.2" y="0.2" width="2.6" height="4" fill="#fff"/><rect x="18.6" y="0.2" width="2.6" height="4" fill="#fff"/><rect x="6.3" y="11.7" width="6" height="6" fill="#fff"/><path d="M16 17.3 L22.5 18.8 L17.5 23.8 Z" fill="#fff"/><path d="M18.5 20 L25 26.5" stroke="#fff" stroke-width="2.4"/></svg>
<svg class="a" style="left:20px;top:585.5px" width="28" height="28" viewBox="0 0 28 28"><circle cx="10.4" cy="11.1" r="8.3" fill="none" stroke="#fff" stroke-width="2.6"/><path d="M16.6 17.3 L24.8 25.5" stroke="#fff" stroke-width="2.8"/></svg>
<svg class="a" style="left:20px;top:623.0px" width="28" height="28" viewBox="0 0 28 28"><path d="M2.4 18 V4.2 H23.8 V17.5 M2.4 18 V23.2 Q2.4 24.3 3.5 24.3 H13.5" fill="none" stroke="#fff" stroke-width="2.6"/><rect x="1.2" y="3" width="23.8" height="7" rx="1.5" fill="#fff"/><rect x="5.2" y="0.2" width="2.6" height="4" fill="#fff"/><rect x="18.6" y="0.2" width="2.6" height="4" fill="#fff"/><rect x="6.3" y="11.7" width="6" height="6" fill="#fff"/><path d="M16 17.3 L22.5 18.8 L17.5 23.8 Z" fill="#fff"/><path d="M18.5 20 L25 26.5" stroke="#fff" stroke-width="2.4"/></svg>
<svg class="a" style="left:15px;top:655.5px" width="36" height="36" viewBox="0 0 36 36"><path d="M13.2 11.8 Q13.2 10.9 14 10.9 H19.2 L25.9 5.3 Q26.4 4.9 26.9 5.4 L30.7 10.6 Q31 11.1 30.6 11.5 L26.9 15.3 H17.6 V18.2 Q17.6 19.6 15.3 19.6 Q13.2 19.6 13.2 18.2 Z" fill="#fff"/><path d="M8.8 16.6 Q9.4 15.7 10.6 15.7 L11.3 15.7 V18.6 Q11.3 21.5 15.3 21.5 Q19.5 21.5 19.5 18.6 V17.2 H28.6 Q29.1 17.3 28.6 17.8 L26.5 19.8 L24.8 21.6 L22 24 Q21.5 24.6 20.8 24.6 H16.6 L10.4 30.9 Q9.8 31.4 9.2 30.9 L4.3 26.4 Q3.8 25.9 4.3 25.4 L8.8 21.2 Z" fill="#fff"/></svg>
<svg class="a" style="left:20px;top:740.0px" width="28" height="28" viewBox="0 0 28 28"><path d="M0.2 3.6 Q0.2 2.2 1.6 2.2 H10.6 Q11.2 2.2 11.6 2.7 L21 13.6 Q21.5 14.3 21 14.9 L12.6 23.2 Q11.9 23.9 11.2 23.2 L0.7 12.9 Q0.2 12.4 0.2 11.7 Z" fill="#fff"/><circle cx="4.7" cy="7.1" r="1.8" fill="#222A38"/><path d="M16.1 3.7 L25.8 13.4 Q26.4 14 25.8 14.6 L18 22.4" fill="none" stroke="#fff" stroke-width="1.9"/></svg>
<svg class="a" style="left:20px;top:775.7px" width="28" height="28" viewBox="0 0 28 28"><path d="M12.9 0.2 Q17.7 0.2 17.7 4.8 Q17.7 7.4 15.9 9.2 Q14.9 10.4 14.9 12 Q14.9 13.6 17.5 13.8 H23 Q24.8 13.9 24.8 16 V19.6 H1.3 V16 Q1.3 13.9 3.1 13.8 H8.3 Q10.9 13.6 10.9 12 Q10.9 10.4 9.9 9.2 Q8.1 7.4 8.1 4.8 Q8.1 0.2 12.9 0.2 Z" fill="#fff"/><rect x="4.7" y="22.3" width="16.7" height="3" fill="#fff"/></svg>
<svg class="a" style="left:20px;top:814.0px" width="28" height="28" viewBox="0 0 28 28"><g fill="none" stroke="#fff"><rect x="1.7" y="1.4" width="7.7" height="4.9" stroke-width="3"/><path d="M13.3 11.65 H5.6 V21.55 H13.3" stroke-width="2.7"/><rect x="17.1" y="10.4" width="7.4" height="4.7" stroke-width="3"/><rect x="17.1" y="19.3" width="7.4" height="4.9" stroke-width="3"/></g></svg>
<svg class="a" style="left:20px;top:851.5px" width="28" height="28" viewBox="0 0 28 28"><path d="M13.6 21.55 H3.2 Q1.95 21.55 1.95 20.3 V2.4 Q1.95 1.15 3.2 1.15 H14.5 L22.6 9.2 V13.1" fill="none" stroke="#fff" stroke-width="2.5" stroke-linejoin="round"/><path d="M14.5 1.15 V9.2 H22.6" fill="none" stroke="#fff" stroke-width="2.4"/><path d="M21.4 15.5 V25.9 M15.8 20.6 H26.4" stroke="#fff" stroke-width="2.5"/></svg>
<svg class="a" style="left:20px;top:891px" width="28" height="6" viewBox="0 0 28 6"><path d="M2 5 V3 Q2 1.8 3.2 1.8 H23 Q24.2 1.8 24.2 3 V5" fill="none" stroke="#fff" stroke-width="2.4"/></svg>
</body></html>
